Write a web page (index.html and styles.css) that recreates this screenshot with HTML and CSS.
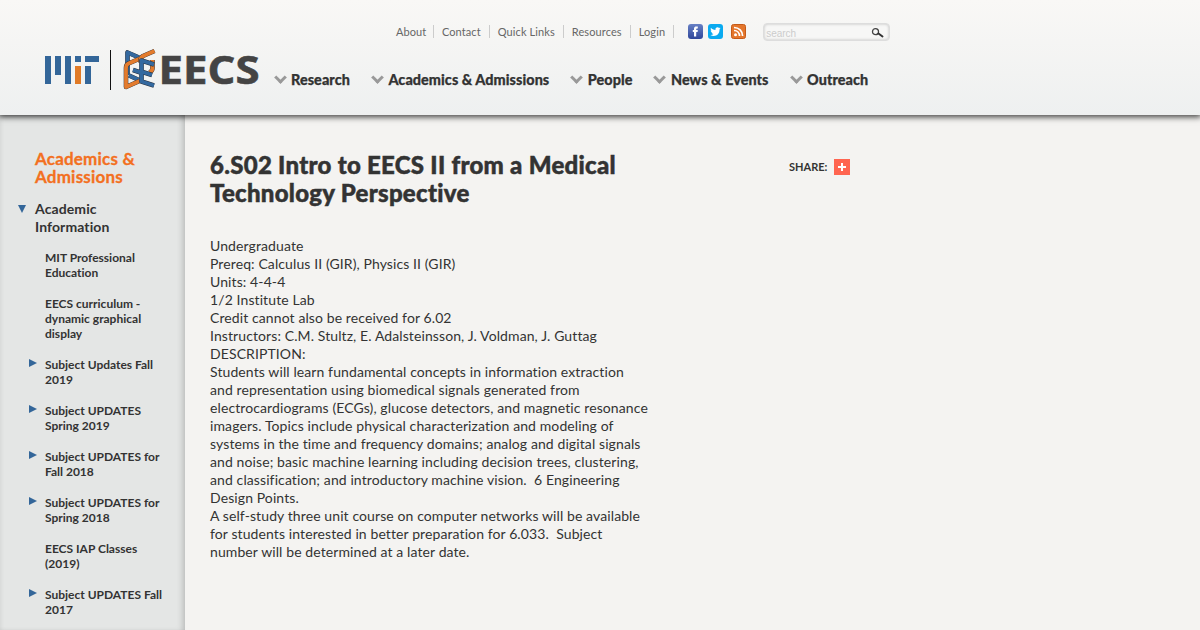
FILE: index.html
```
<!DOCTYPE html>
<html lang="en">
<head>
  <meta charset="utf-8">
  <title>6.S02 Intro to EECS II from a Medical Technology Perspective | MIT EECS</title>
  <link rel="stylesheet" href="styles.css">
</head>
<body>
  <header class="header">
    <a class="logo" href="#">
      <svg width="224" height="48" viewBox="40 46 224 48">
        <path fill="#336699" d="M45 56h6v28h-6zM55 56h6v19h-6zM65 56h6v28h-6zM75 56h6v6h-6zM85 56h14v6h-14zM85 66h6v18h-6z"/>
        <path fill="#e07a26" d="M75 66h6v18h-6z"/>
        <path fill="#111" d="M110 50h1v40h-1z"/>
        <defs>
          <path id="e-left" d="M139 57.500l-11.500-5V75M139 80l-10-4.500"/>
          <path id="c-left" d="M140 58.500l-11.500 5q-2.500 1-2.500 4.500V87l13.500-6"/>
          <path id="s-right" d="M154.500 51L143 56q-2.500 1.500-2.500 4.500v2M152.500 60v8q0 3-3 4.500"/>
          <path id="e-right" d="M154 64.500l-12.500-4V81.500l12.500 4M141 71.500l11 3.500M133 70l9 3"/>
        </defs>
        <g class="emblem">
          <use href="#e-left" class="edge"/><use href="#e-left" class="blue"/>
          <use href="#c-left" class="edge"/><use href="#c-left" class="orange"/>
          <use href="#s-right" class="edge"/><use href="#s-right" class="orange"/>
          <use href="#e-right" class="edge"/><use href="#e-right" class="blue"/>
        </g>
        <text class="wordmark" x="158.500" y="84" textLength="101" lengthAdjust="spacingAndGlyphs">EECS</text>
      </svg>
    </a>
    <div class="navs">
      <div class="top-bar">
        <ul class="utility">
          <li><a href="#">About</a></li>
          <li><a href="#">Contact</a></li>
          <li><a href="#">Quick Links</a></li>
          <li><a href="#">Resources</a></li>
          <li><a href="#">Login</a></li>
        </ul>
        <div class="social">
          <svg width="15" height="15" viewBox="0 0 15 15"><defs><linearGradient id="fb" x2="0" y2="1"><stop stop-color="#6780c5"/><stop offset="1" stop-color="#30479a"/></linearGradient></defs><rect width="15" height="15" rx="3" fill="url(#fb)"/><path fill="#fff" d="M6 12.500V8H4.800V6H6V4.800C6 3 7 2.500 8.300 2.500h1.500v2H9c-.6 0-.8.3-.8.800V6h1.600l-.2 2H8.200v4.500z"/></svg>
          <svg width="15" height="15" viewBox="0 0 15 15"><rect width="15" height="15" rx="3" fill="#0aaaf0"/><path fill="#fff" d="M12.600 4.200l-1 .3.700-1.100-1.200.5a2.200 2.200 0 0 0-3.700 2C5.500 5.800 4 5 3 3.700c-.6 1-.3 2.200.6 2.900l-.9-.2c0 1 .7 1.900 1.700 2.100l-.9.100c.3.800 1 1.400 2 1.500-.9.700-2 1-3.100.900 4.500 2.600 9.300-.300 9.100-5.500z"/></svg>
          <svg class="rss" width="15" height="15" viewBox="0 0 15 15"><rect x=".5" y=".5" width="14" height="14" rx="2" fill="#e4762c" stroke="#c55a18"/><circle cx="4.500" cy="10.700" r="1.500" fill="#fff"/><path fill="none" stroke="#fff" stroke-width="1.700" d="M3 6.500c3.200 0 5.500 2.300 5.500 5.600M3 3.500c5 0 8.600 3.600 8.600 8.600"/></svg>
        </div>
        <form class="search">
          <input type="text" placeholder="search">
          <svg width="13" height="10" viewBox="0 0 13 10"><circle cx="4.500" cy="3.700" r="3" fill="none" stroke="#444" stroke-width="1.300"/><path stroke="#333" stroke-width="2" stroke-linecap="round" d="M7.500 5.500l4 3"/></svg>
        </form>
      </div>
      <ul class="main-nav">
        <li><a href="#">Research</a></li>
        <li><a href="#">Academics &amp; Admissions</a></li>
        <li><a href="#">People</a></li>
        <li><a href="#">News &amp; Events</a></li>
        <li><a href="#">Outreach</a></li>
      </ul>
    </div>
  </header>
  <div class="wrap">
    <aside class="sidebar">
      <h2>Academics &amp; Admissions</h2>
      <h3>Academic Information</h3>
      <ul>
        <li>MIT Professional Education</li>
        <li>EECS curriculum - dynamic graphical display</li>
        <li class="more">Subject Updates Fall 2019</li>
        <li class="more">Subject UPDATES Spring 2019</li>
        <li class="more">Subject UPDATES for Fall 2018</li>
        <li class="more">Subject UPDATES for Spring 2018</li>
        <li>EECS IAP Classes (2019)</li>
        <li class="more">Subject UPDATES Fall 2017</li>
      </ul>
    </aside>
    <main class="content">
      <h1>6.S02 Intro to EECS II from a Medical Technology Perspective</h1>
      <p>Undergraduate<br>
      Prereq: Calculus II (GIR), Physics II (GIR)<br>
      Units: 4-4-4<br>
      1/2 Institute Lab<br>
      Credit cannot also be received for 6.02<br>
      Instructors: C.M. Stultz, E. Adalsteinsson, J. Voldman, J. Guttag</p>
      <p>DESCRIPTION:</p>
      <p>Students will learn fundamental concepts in information extraction and representation using biomedical signals generated from electrocardiograms (ECGs), glucose detectors, and magnetic resonance imagers. Topics include physical characterization and modeling of systems in the time and frequency domains; analog and digital signals and noise; basic machine learning including decision trees, clustering, and classification; and introductory machine vision.&nbsp; 6 Engineering Design Points.</p>
      <p>A self-study three unit course on computer networks will be available for students interested in better preparation for 6.033.&nbsp; Subject number will be determined at a later date.</p>
    </main>
    <div class="share">
      <span>SHARE:</span>
      <svg width="16" height="16" viewBox="0 0 16 16"><path fill="#ff6550" d="M0 0h16v16H0z"/><path fill="#fff" d="M7 4h2v3h3v2H9v3H7V9H4V7h3z"/></svg>
    </div>
  </div>
</body>
</html>
```
FILE: styles.css
```
*,:after,:before{box-sizing:border-box}
body{
  margin:0;
  height:630px;
  overflow:hidden;
  color:#333;
  background:#f4f3f1;
  font:14px/18px Lato,sans-serif;
  font-variant-ligatures:none;
}
a{color:inherit;text-decoration:none}
ul{
  margin:0;
  padding:0;
  list-style:none;
}
h1,h2,h3,p{margin:0}
svg{display:block}

.header{
  position:relative;
  display:flex;
  height:115px;
  background:linear-gradient(#f9f8f6,#eef0f0);
  box-shadow:0 1px 6px 1px rgba(0,0,0,.75);
}
.logo{padding:46px 0 0 40px}
.logo svg{overflow:visible}
.wordmark{
  fill:#444;
  stroke:#444;
  stroke-width:.6;
  font:bold 39px 'Open Sans',sans-serif;
}
.emblem{
  fill:none;
  stroke-linejoin:round;
}
.emblem .edge{
  stroke:#2a2f38;
  stroke-width:4.6;
}
.emblem .blue{
  stroke:#34699f;
  stroke-width:3.8;
}
.emblem .orange{
  stroke:#e37b2d;
  stroke-width:3.8;
}
.navs{
  width:640px;
  margin-left:10px;
}
.top-bar{
  display:flex;
  height:22px;
  margin-top:23px;
}
.utility{
  display:flex;
  margin-left:114px;
  padding-top:2px;
  color:#666;
  font-size:11px;
  line-height:13px;
  letter-spacing:.1px;
}
.utility li{
  height:13px;
  padding:0 8px;
  border-right:1px solid #ccc;
}
.utility li:first-child{padding-right:6.5px}
.social{
  display:flex;
  gap:5px;
  margin:1px 0 0 14px;
}
.social .rss{margin-left:3px}
.search{
  display:flex;
  width:127px;
  height:18px;
  margin-left:17px;
  padding:4px 6px 0 2px;
  border:1px solid #ddd;
  border-radius:4px;
  background:#f7f7f6;
  box-shadow:inset 0 0 3px #bbb;
}
.search input{
  width:105px;
  height:10px;
  padding:0;
  border:0;
  outline:0;
  background:none;
  font:10px/10px 'Liberation Sans',sans-serif;
}
.search input::placeholder{color:#ccc}
.search svg{flex:none}
.main-nav{
  display:flex;
  gap:21.5px;
  margin-top:26px;
  font-size:14.4px;
  font-weight:900;
  letter-spacing:.06px;
  -webkit-text-stroke:.25px #333;
}
.main-nav li{
  display:flex;
  align-items:center;
}
.main-nav li:before{
  content:'';
  width:9px;
  height:9px;
  margin:-6px 6.5px 0 1.5px;
  border:solid #999;
  border-width:0 3px 3px 0;
  transform:rotate(45deg);
}

.wrap{
  display:flex;
  align-items:flex-start;
}
.sidebar{
  width:185px;
  height:515px;
  padding:35px 20px 0 35px;
  background:#e4e6e5;
  box-shadow:inset -5px 0 6px -3px rgba(0,0,0,.2),inset 3px 0 5px -3px rgba(0,0,0,.1);
}
.sidebar h2{
  color:#f37021;
  font-size:17px;
  line-height:18px;
  font-weight:bold;
  letter-spacing:.2px;
  -webkit-text-stroke:.3px #f37021;
}
.sidebar h3{
  position:relative;
  margin-top:14px;
  font-size:14px;
  line-height:18px;
  letter-spacing:.1px;
}
.sidebar h3:before,
.sidebar .more:before{
  content:'';
  position:absolute;
  top:5px;
  left:-17px;
  border:solid transparent;
  border-width:8px 4px 0;
  border-top-color:#369;
}
.sidebar ul{
  margin:14px 0 0 10px;
  font-size:12px;
  line-height:15px;
  font-weight:bold;
}
.sidebar li{
  position:relative;
  margin-bottom:16px;
}
.sidebar .more:before{
  top:2px;
  left:-16px;
  border-width:4px 0 4px 8px;
  border-color:transparent;
  border-left-color:#369;
}
.content{
  width:440px;
  margin-left:25px;
  padding-top:36px;
  letter-spacing:.1px;
}
.content h1{
  margin-bottom:30px;
  font-size:24px;
  line-height:28px;
  font-weight:900;
  letter-spacing:.28px;
  -webkit-text-stroke:.5px #333;
}
.share{
  display:flex;
  gap:7px;
  margin:44px 0 0 139px;
  font-size:11px;
  line-height:16px;
  font-weight:bold;
}
```
